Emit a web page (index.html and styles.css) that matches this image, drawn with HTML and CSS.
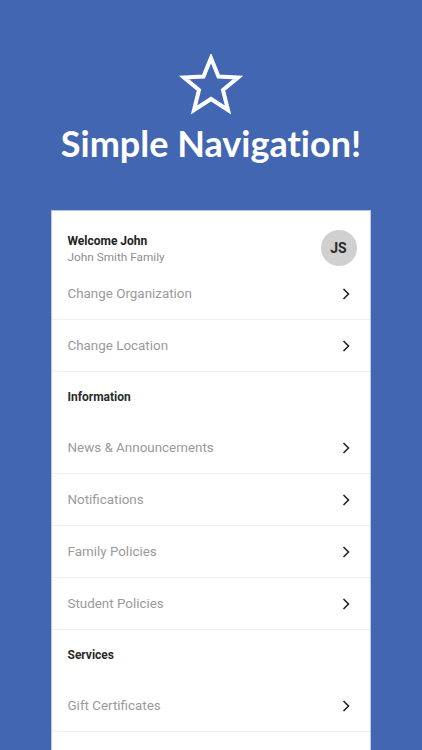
FILE: index.html
```html
<!DOCTYPE html>
<html>
<head>
<meta charset="utf-8">
<link rel="stylesheet" href="styles.css">
</head>
<body>
<div class="page">
  <header class="hero">
    <svg class="star" width="64" height="62" viewBox="0 0 64 62">
      <polygon points="32,4 39.5,22.5 59,23.5 44,36 49,56 32,45 15,56 20,36 5,23.5 24.5,22.5" fill="none" stroke="#fff" stroke-width="4" stroke-linejoin="miter"/>
    </svg>
    <h1 class="title">Simple Navigation!</h1>
  </header>
  <main class="card">
    <div class="welcome">
      <div class="welcome-text">
        <div class="welcome-name">Welcome John</div>
        <div class="welcome-family">John Smith Family</div>
      </div>
      <div class="avatar">JS</div>
    </div>
    <div class="row"><span>Change Organization</span><svg class="chev" width="8" height="12" viewBox="0 0 8 12"><path d="M1.5 1 L6.5 6 L1.5 11" fill="none" stroke="#222" stroke-width="1.6"/></svg></div>
    <div class="row"><span>Change Location</span><svg class="chev" width="8" height="12" viewBox="0 0 8 12"><path d="M1.5 1 L6.5 6 L1.5 11" fill="none" stroke="#222" stroke-width="1.6"/></svg></div>
    <div class="section">Information</div>
    <div class="row"><span>News &amp; Announcements</span><svg class="chev" width="8" height="12" viewBox="0 0 8 12"><path d="M1.5 1 L6.5 6 L1.5 11" fill="none" stroke="#222" stroke-width="1.6"/></svg></div>
    <div class="row"><span>Notifications</span><svg class="chev" width="8" height="12" viewBox="0 0 8 12"><path d="M1.5 1 L6.5 6 L1.5 11" fill="none" stroke="#222" stroke-width="1.6"/></svg></div>
    <div class="row"><span>Family Policies</span><svg class="chev" width="8" height="12" viewBox="0 0 8 12"><path d="M1.5 1 L6.5 6 L1.5 11" fill="none" stroke="#222" stroke-width="1.6"/></svg></div>
    <div class="row"><span>Student Policies</span><svg class="chev" width="8" height="12" viewBox="0 0 8 12"><path d="M1.5 1 L6.5 6 L1.5 11" fill="none" stroke="#222" stroke-width="1.6"/></svg></div>
    <div class="section">Services</div>
    <div class="row"><span>Gift Certificates</span><svg class="chev" width="8" height="12" viewBox="0 0 8 12"><path d="M1.5 1 L6.5 6 L1.5 11" fill="none" stroke="#222" stroke-width="1.6"/></svg></div>
    <div class="row"><span></span></div>
  </main>
</div>
</body>
</html>
```
FILE: styles.css
```css
html, body {
  margin: 0;
  padding: 0;
  background: #4366b3;
  overflow: hidden;
}
.page {
  width: 422px;
  height: 750px;
  display: flex;
  flex-direction: column;
  align-items: center;
  font-family: Roboto, "Liberation Sans", sans-serif;
}
.hero {
  display: flex;
  flex-direction: column;
  align-items: center;
  padding-top: 54px;
}
.star {
  display: block;
}
.title {
  margin: 5px 0 0 0;
  color: #fff;
  font-family: Lato, "Open Sans", sans-serif;
  font-weight: 700;
  font-size: 36px;
  line-height: 44px;
  font-variant-ligatures: none;
}
.card {
  margin-top: 45px;
  margin-left: -1px;
  width: 318px;
  flex: 1;
  background: #fff;
  border: 1px solid #b9c7e6;
  border-bottom: none;
}
.welcome {
  box-sizing: border-box;
  height: 57px;
  display: flex;
  align-items: center;
  justify-content: space-between;
  padding: 16px 13px 0 16px;
}
.welcome-text {
  display: flex;
  flex-direction: column;
  padding-top: 2px;
}
.welcome-name {
  font-size: 12px;
  font-weight: 700;
  color: #222;
  line-height: 16px;
}
.welcome-family {
  font-size: 11.8px;
  color: #8e8e8e;
  line-height: 16px;
}
.avatar {
  width: 36px;
  height: 36px;
  border-radius: 50%;
  background: #d0d0d0;
  color: #2a2a2a;
  font-weight: 700;
  font-size: 14px;
  display: flex;
  align-items: center;
  justify-content: center;
}
.row {
  height: 51px;
  border-bottom: 1px solid #efefef;
  display: flex;
  align-items: center;
  justify-content: space-between;
  padding: 0 20px 0 16px;
  font-size: 13.4px;
  color: #9a9a9a;
}
.chev {
  display: block;
}
.section {
  height: 50px;
  display: flex;
  align-items: center;
  padding: 0 16px;
  font-size: 12px;
  font-weight: 700;
  color: #2a2a2a;
}
```
